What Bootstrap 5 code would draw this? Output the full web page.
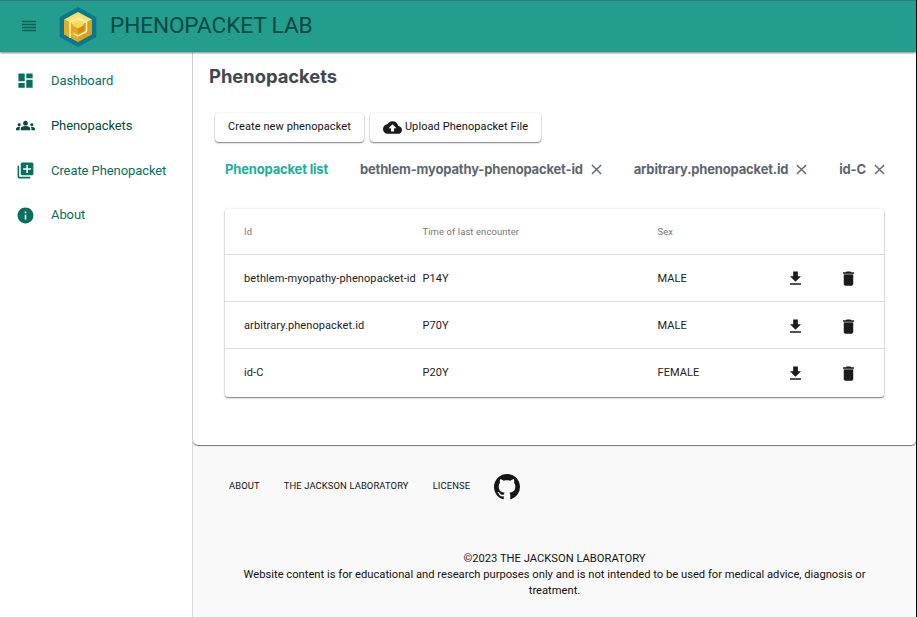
<!DOCTYPE html>
<html lang="en">
<head>
<meta charset="utf-8">
<meta name="viewport" content="width=device-width, initial-scale=1">
<title>Phenopacket Lab</title>
<link href="https://cdn.jsdelivr.net/npm/bootstrap@5.3.0/dist/css/bootstrap.min.css" rel="stylesheet">
<style>
body{font-family:Roboto,"Liberation Sans",sans-serif;font-size:11px;color:#212121;background:#fff;height:617px;overflow:hidden;border-right:1px solid #000}
svg{display:block;flex:none}
.topbar{height:52px;background:#239d8e;border-top:1px solid #3d7280;box-shadow:0 1px 2px rgba(0,0,0,.5);color:#044a3e;position:relative;z-index:2;padding:0 0 1px 22px}
.brand-logo{margin:2px 0 0 23px}
.brand-title{font-size:22.6px;line-height:28px;margin-left:13px;letter-spacing:-.1px}
.side{width:193px;border-right:1px solid #dcdcdc;padding-top:6px}
.side a{height:45px;padding-left:16px;font-size:13px;letter-spacing:-.08px;color:#06705f;text-decoration:none}
.side a:last-child{height:44px}
.side a.current{color:#044a3e}
.side span{margin-left:16px}
.page{height:565px}
.main-panel{height:393px;background:#fff;border-radius:0 0 5px 5px;box-shadow:0 1px 1px rgba(0,0,0,.55);padding:13px 31px 0 16px}
.page-body{background:#f9f9f9}
.page-title{font:700 18.4px/22px Inter,sans-serif;color:#3f4750;letter-spacing:-.03px;margin:0}
.tool{height:29px;background:#fff;border:0;border-radius:4px;box-shadow:0 1px 1.5px rgba(0,0,0,.5),0 0 2px rgba(0,0,0,.1);font-size:11px;color:#111;padding:0 13px;letter-spacing:.09px}
.tool span{margin-left:3px}
.tools{margin:26px 0 0 6px;gap:6px}
.tabs-row{margin:17px 0 0 16px;font:700 13px/20px Inter,sans-serif;letter-spacing:-.17px;color:#5d6670}
.tabs-row .active{color:#1cae9b}
.grid-table{width:659px;margin:30px 0 0 16px;box-shadow:0 1px 1.5px rgba(0,0,0,.5),0 0 3px rgba(0,0,0,.1);border-radius:3px;background:#fff}
.grid-line{display:grid;grid-template-columns:178.5px 235px 128px 53px 1fr;height:47px;padding:2px 0 0 19px;align-items:center;border-top:1px solid #dcdcdc;letter-spacing:.09px}
.grid-line svg{margin-top:1px}
.grid-head + .grid-line svg{margin:0 0 1px}
.grid-line:last-child{height:49px;padding-bottom:2px}
.grid-head{height:45px;border:0;font-size:9.4px;color:#757575;letter-spacing:.12px}
.foot-links{padding:28px 0 0 36px;font-size:9.4px;letter-spacing:.13px;color:#111}
.foot-links a{color:inherit;text-decoration:none}
.foot-links svg{margin-top:1px}
.legal{margin:51px 0 0;padding:0 42px;line-height:16px;color:#111;font-size:11.2px}
</style>
<script src="https://cdn.jsdelivr.net/npm/bootstrap@5.3.0/dist/js/bootstrap.bundle.min.js"></script>
</head>
<body>
<svg width="0" height="0" class="d-none">
<symbol id="dl" viewBox="0 0 24 24"><path d="M19 9h-4V3H9v6H5l7 7 7-7zM5 18v2h14v-2H5z"/></symbol>
<symbol id="bin" viewBox="0 0 24 24"><path d="M6 19c0 1.1.9 2 2 2h8c1.1 0 2-.9 2-2V7H6v12z"/><path d="M6 6h12v1H6z" opacity=".55"/><path d="M19 4h-3.5l-1-1h-5l-1 1H5v2h14V4z"/></symbol>
<symbol id="x" viewBox="0 0 12 12"><path d="M1 1l10 10M11 1L1 11" fill="none" stroke="#5d6670" stroke-width="1.5"/></symbol>
</svg>
<header class="topbar d-flex align-items-center">
<svg width="14" height="12" viewBox="0 0 14 12"><path d="M0 1.500h14M0 4.500h14M0 7.500h14M0 10.500h14" stroke="#0d6153" stroke-width="1.3"/></svg>
<svg class="brand-logo" width="38" height="40" viewBox="0 0 38 40"><path d="M19 0L37.300 10v20L19 40 .7 30V10z" fill="#08788f"/><path d="M19 5l14 7.500-14 8-14-8z" fill="#fbe067"/><path d="M5 12.500l14 8V35L5 27.500z" fill="#e9ab20"/><path d="M33 12.500l-14 8V35l14-7.500z" fill="#dc9f1d"/><path d="M19 14.500l6.500 3.500-6.500 3.500-6.500-3.500z" fill="#f8d84f"/><path d="M12.500 18l6.500 3.500V27l-6.500-3.500z" fill="#e4a51c"/><path d="M25.500 18L19 21.500V27l6.500-3.500z" fill="#ce8d13"/><path d="M11 31V15l8-4 8.500 4v9.500L19 29l-4.500-2.300" fill="none" stroke="#fff3c4" stroke-width="1.500"/></svg>
<span class="brand-title">PHENOPACKET LAB</span>
</header>
<div class="page d-flex">
<nav class="side flex-shrink-0 d-flex flex-column">
<a href="#" class="d-flex align-items-center"><svg width="19" height="19" viewBox="0 0 24 24" fill="currentColor"><path d="M3 13h8V3H3v10zm0 8h8v-6H3v6zm10 0h8V11h-8v10zm0-18v6h8V3h-8z"/></svg><span>Dashboard</span></a>
<a href="#" class="current d-flex align-items-center"><svg width="19" height="19" viewBox="0 0 24 24" fill="currentColor"><path d="M12 12.750c1.630 0 3.070.390 4.240.900 1.080.480 1.760 1.560 1.760 2.730V18H6v-1.610c0-1.180.680-2.260 1.760-2.730 1.170-.520 2.610-.910 4.240-.910zM4 13c1.100 0 2-.900 2-2s-.900-2-2-2-2 .900-2 2 .900 2 2 2zm1.130 1.100C4.760 14.040 4.390 14 4 14c-.990 0-1.930.210-2.780.580C.480 14.900 0 15.620 0 16.430V18h4.500v-1.610c0-.830.230-1.610.630-2.290zM20 13c1.100 0 2-.900 2-2s-.900-2-2-2-2 .900-2 2 .900 2 2 2zm4 3.430c0-.810-.480-1.530-1.220-1.850C21.930 14.210 20.990 14 20 14c-.390 0-.760.040-1.130.100.400.680.630 1.460.630 2.290V18H24v-1.570zM12 6c1.660 0 3 1.340 3 3s-1.340 3-3 3-3-1.340-3-3 1.340-3 3-3z"/></svg><span>Phenopackets</span></a>
<a href="#" class="d-flex align-items-center"><svg width="19" height="19" viewBox="0 0 24 24" fill="currentColor"><path d="M4 6H2v14c0 1.100.900 2 2 2h14v-2H4V6zm16-4H8c-1.100 0-2 .900-2 2v12c0 1.100.900 2 2 2h12c1.100 0 2-.900 2-2V4c0-1.100-.900-2-2-2zm-1 9h-4v4h-2v-4H9V9h4V5h2v4h4v2z"/></svg><span>Create Phenopacket</span></a>
<a href="#" class="d-flex align-items-center"><svg width="19" height="19" viewBox="0 0 24 24" fill="currentColor"><path d="M12 2C6.480 2 2 6.480 2 12s4.480 10 10 10 10-4.480 10-10S17.520 2 12 2zm1 15h-2v-6h2v6zm0-8h-2V7h2v2z"/></svg><span>About</span></a>
</nav>
<div class="page-body flex-grow-1">
<main class="main-panel">
<h1 class="page-title">Phenopackets</h1>
<div class="tools d-flex"><button class="tool">Create new phenopacket</button><button class="tool d-flex align-items-center"><svg width="19" height="19" viewBox="0 0 24 24" fill="#1b1b1b"><path d="M19.350 10.040C18.670 6.590 15.640 4 12 4 9.110 4 6.600 5.640 5.350 8.040 2.340 8.360 0 10.910 0 14c0 3.310 2.690 6 6 6h13c2.760 0 5-2.240 5-5 0-2.640-2.050-4.780-4.650-4.960zM14 13v4h-4v-4H7l5-5 5 5h-3z"/></svg><span>Upload Phenopacket File</span></button></div>
<div class="tabs-row d-flex justify-content-between">
<span class="active">Phenopacket list</span>
<span class="d-flex align-items-center">bethlem-myopathy-phenopacket-id<svg class="ms-2" width="11" height="11"><use href="#x"/></svg></span>
<span class="d-flex align-items-center">arbitrary.phenopacket.id<svg class="ms-2" width="11" height="11"><use href="#x"/></svg></span>
<span class="d-flex align-items-center">id-C<svg class="ms-2" width="11" height="11"><use href="#x"/></svg></span>
</div>
<div class="grid-table">
<div class="grid-line grid-head"><span>Id</span><span>Time of last encounter</span><span>Sex</span></div>
<div class="grid-line"><span>bethlem-myopathy-phenopacket-id</span><span>P14Y</span><span>MALE</span><svg width="19" height="19" fill="#1b1b1b"><use href="#dl"/></svg><svg width="19" height="19" fill="#1b1b1b"><use href="#bin"/></svg></div>
<div class="grid-line"><span>arbitrary.phenopacket.id</span><span>P70Y</span><span>MALE</span><svg width="19" height="19" fill="#1b1b1b"><use href="#dl"/></svg><svg width="19" height="19" fill="#1b1b1b"><use href="#bin"/></svg></div>
<div class="grid-line"><span>id-C</span><span>P20Y</span><span>FEMALE</span><svg width="19" height="19" fill="#1b1b1b"><use href="#dl"/></svg><svg width="19" height="19" fill="#1b1b1b"><use href="#bin"/></svg></div>
</div>
</main>
<footer>
<div class="foot-links d-flex align-items-center gap-4"><a href="#">ABOUT</a><a href="#">THE JACKSON LABORATORY</a><a href="#">LICENSE</a>
<a href="#" aria-label="GitHub"><svg width="26" height="26" viewBox="0 0 16 16" fill="#151515"><path d="M8 0C3.580 0 0 3.580 0 8c0 3.540 2.290 6.530 5.470 7.590.400.070.550-.170.550-.380 0-.190-.010-.820-.010-1.490-2.010.370-2.530-.490-2.690-.940-.090-.230-.480-.940-.820-1.130-.280-.150-.680-.520-.010-.530.630-.010 1.080.580 1.230.820.720 1.210 1.870.870 2.330.660.070-.520.280-.870.510-1.070-1.780-.200-3.640-.890-3.640-3.950 0-.870.310-1.590.820-2.150-.080-.200-.360-1.020.080-2.120 0 0 .670-.210 2.200.820.640-.180 1.320-.270 2-.270s1.360.090 2 .270c1.530-1.040 2.200-.820 2.200-.820.440 1.100.160 1.920.080 2.120.510.560.820 1.270.820 2.150 0 3.070-1.870 3.750-3.650 3.950.290.250.540.730.540 1.480 0 1.070-.010 1.930-.010 2.200 0 .210.150.460.550.380A8.010 8.010 0 0 0 16 8c0-4.420-3.580-8-8-8z"/></svg></a></div>
<p class="legal text-center">©2023 THE JACKSON LABORATORY<br>Website content is for educational and research purposes only and is not intended to be used for medical advice, diagnosis or treatment.</p>
</footer>
</div>
</div>
</body>
</html>
